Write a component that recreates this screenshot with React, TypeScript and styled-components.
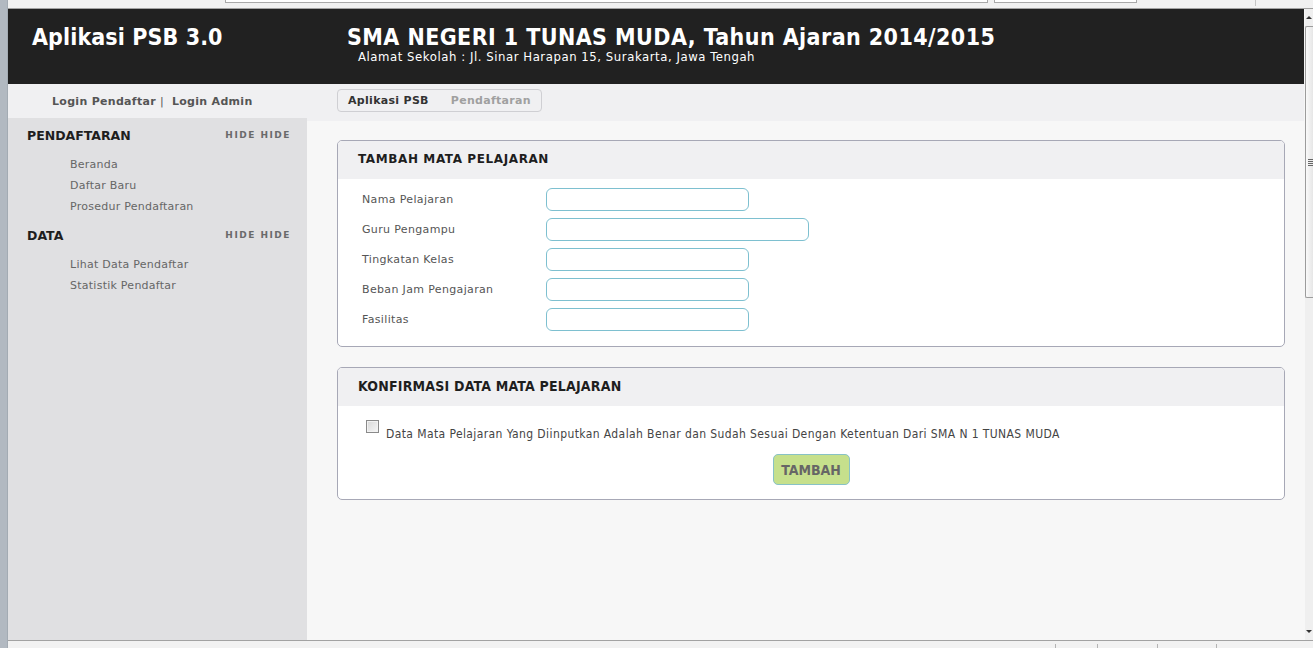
import React from "react";
import styled, { createGlobalStyle } from "styled-components";

const GlobalStyle = createGlobalStyle`
  html, body { margin: 0; padding: 0; background: #f7f7f7; }
  body { font-family: "DejaVu Sans", Verdana, sans-serif; overflow: hidden; }
  * { box-sizing: border-box; }
`;

const Frame = styled.div`
  display: flex;
  width: 1313px;
  height: 648px;
  overflow: hidden;
`;

const LeftEdge = styled.div`
  width: 8px;
  flex: none;
  background: #b2b9c1;
  border-right: 1px solid #a3abb3;
`;

const Window = styled.div`
  flex: 1;
  display: flex;
  flex-direction: column;
  min-width: 0;
`;

const TopStrip = styled.div`
  height: 9px;
  flex: none;
  display: flex;
  align-items: flex-start;
  background: #f1f1f1;
  border-bottom: 1px solid #a2a2a2;
  overflow: hidden;
`;

const ChromeBox = styled.div<{ $left: number; $width: number }>`
  margin-left: ${(p) => p.$left}px;
  width: ${(p) => p.$width}px;
  height: 3px;
  flex: none;
  background: #fff;
  border: 1px solid #a9a9a9;
  border-top: none;
`;

const ChromeDivider = styled.div<{ $left: number }>`
  margin-left: ${(p) => p.$left}px;
  width: 1px;
  height: 6px;
  background: #c4c4c4;
  flex: none;
`;

const Middle = styled.div`
  flex: 1;
  display: flex;
  min-height: 0;
`;

const Page = styled.div`
  flex: 1;
  display: flex;
  flex-direction: column;
  min-width: 0;
`;

const Header = styled.header`
  height: 75px;
  flex: none;
  display: grid;
  grid-template-columns: 315px 1fr;
  padding: 15px 0 0 24px;
  background: #212121;
  color: #fff;
`;

const Brand = styled.div`
  font-family: "DejaVu Sans Condensed", "DejaVu Sans", sans-serif;
  font-weight: bold;
  font-size: 23px;
  line-height: 26px;
  letter-spacing: 0.1px;
`;

const SchoolBlock = styled.div`
  display: flex;
  flex-direction: column;
`;

const SchoolTitle = styled.div`
  font-family: "DejaVu Sans Condensed", "DejaVu Sans", sans-serif;
  font-weight: bold;
  font-size: 23px;
  line-height: 26px;
  letter-spacing: 0.42px;
  white-space: nowrap;
`;

const Address = styled.div`
  margin-left: 11px;
  font-family: "DejaVu Sans Condensed", "DejaVu Sans", sans-serif;
  font-size: 13px;
  line-height: 13px;
  letter-spacing: 0.55px;
  white-space: nowrap;
`;

const SubNav = styled.nav`
  height: 34px;
  flex: none;
  display: grid;
  grid-template-columns: 299px 1fr;
  background: #f0f0f2;
`;

const LoginLinks = styled.div`
  display: flex;
  align-items: center;
  padding: 0 0 0 44px;
  font-size: 11px;
  font-weight: bold;
  letter-spacing: 0.3px;
  color: #555;
`;

const Pipe = styled.span`
  font-weight: normal;
  margin: 0 8px 0 4px;
  color: #555;
`;

const TabCell = styled.div`
  padding: 5px 0 0 30px;
`;

const TabBox = styled.div`
  display: inline-flex;
  align-items: center;
  gap: 22px;
  height: 23px;
  padding: 0 10px;
  border: 1px solid #cfcfd3;
  border-radius: 4px;
  background: #f0f0f2;
  font-size: 11px;
  font-weight: bold;
  letter-spacing: 0.3px;
`;

const Tab = styled.span<{ $active?: boolean }>`
  color: ${(p) => (p.$active ? "#333" : "#a0a0a0")};
`;

const Body = styled.div`
  flex: 1;
  display: flex;
  min-height: 0;
`;

const Sidebar = styled.aside`
  width: 299px;
  flex: none;
  background: #e0e0e2;
  padding-top: 10px;
`;

const Section = styled.div`
  & + & {
    margin-top: 11px;
  }
`;

const SectionHead = styled.div`
  display: flex;
  justify-content: space-between;
  align-items: flex-start;
  padding: 0 16px 0 19px;
`;

const SectionTitle = styled.div`
  font-size: 12.5px;
  line-height: 16px;
  font-weight: bold;
  color: #1e1e1e;
`;

const HideLinks = styled.div`
  font-size: 9px;
  line-height: 14px;
  font-weight: bold;
  letter-spacing: 1.5px;
  color: #6a6a6a;
`;

const MenuList = styled.ul`
  list-style: none;
  margin: 10px 0 0;
  padding: 0 0 0 62px;
`;

const MenuItem = styled.li`
  font-size: 11px;
  line-height: 21px;
  letter-spacing: 0.25px;
  color: #666;
`;

const Main = styled.main`
  flex: 1;
  min-width: 0;
  background: #f7f7f7;
  border-top: 3px solid #f0f0f2;
  padding: 19px 19px 0 30px;
`;

const Card = styled.section`
  border: 1px solid #a7a8b6;
  border-radius: 5px;
  background: #fff;
  overflow: hidden;
  & + & {
    margin-top: 20px;
  }
`;

const CardHead = styled.div<{ $condensed?: boolean }>`
  height: 38px;
  display: flex;
  align-items: center;
  padding: 0 0 2px 20px;
  background: #f0f0f2;
  font-family: ${(p) =>
    p.$condensed ? `"DejaVu Sans Condensed", "DejaVu Sans", sans-serif` : `"DejaVu Sans", sans-serif`};
  font-size: ${(p) => (p.$condensed ? "14px" : "12px")};
  letter-spacing: ${(p) => (p.$condensed ? "0.2px" : "0.6px")};
  font-weight: bold;
  color: #1e1e1e;
`;

const FormBody = styled.div`
  display: grid;
  grid-template-columns: 184px 1fr;
  row-gap: 7px;
  align-items: center;
  padding: 9px 24px 15px;
`;

const Label = styled.label`
  font-size: 11px;
  letter-spacing: 0.35px;
  color: #555;
`;

const TextInput = styled.input<{ $wide?: boolean }>`
  width: ${(p) => (p.$wide ? 263 : 203)}px;
  height: 23px;
  border: 1px solid #7ec0d0;
  border-radius: 6px;
  background: #fff;
  outline: none;
  padding: 0 6px;
`;

const ConfirmBody = styled.div`
  display: flex;
  flex-direction: column;
  align-items: center;
  padding: 14px 0 14px;
`;

const CheckRow = styled.div`
  align-self: stretch;
  display: flex;
  align-items: flex-start;
  gap: 7px;
  padding-left: 28px;
`;

const CheckBox = styled.span`
  width: 13px;
  height: 13px;
  flex: none;
  border: 1px solid #8a8a8a;
  background: linear-gradient(135deg, #d8d8d8, #f6f6f6);
  box-shadow: inset 0 0 0 1px #f2f2f2;
`;

const CheckText = styled.span`
  padding-top: 7px;
  font-family: "DejaVu Sans Condensed", "DejaVu Sans", sans-serif;
  font-size: 12px;
  line-height: 14px;
  letter-spacing: 0.4px;
  color: #444;
  white-space: nowrap;
`;

const SubmitButton = styled.button`
  margin-top: 13px;
  width: 77px;
  height: 31px;
  border: 1px solid #88c2c6;
  border-radius: 5px;
  background: #c6e08c;
  font-family: "DejaVu Sans Condensed", "DejaVu Sans", sans-serif;
  font-weight: bold;
  font-size: 14px;
  color: #666;
  padding: 0;
`;

const Scrollbar = styled.div`
  width: 9px;
  flex: none;
  display: flex;
  flex-direction: column;
  background: #efefef;
  border-left: 1px solid #f7f7f7;
`;

const ScrollArrow = styled.div<{ $down?: boolean }>`
  height: 17px;
  flex: none;
  display: flex;
  align-items: center;
  justify-content: center;
  &::after {
    content: "";
    width: 0;
    height: 0;
    border-left: 3px solid transparent;
    border-right: 3px solid transparent;
    ${(p) => (p.$down ? "border-top: 3px solid #333;" : "border-bottom: 3px solid #333;")}
  }
`;

const ScrollThumb = styled.div`
  height: 272px;
  flex: none;
  border: 1px solid #9c9c9c;
  border-right: none;
  border-radius: 2px 0 0 2px;
  background: linear-gradient(90deg, #fafafa, #e6e6e6);
  display: flex;
  align-items: center;
  justify-content: flex-end;
`;

const Grip = styled.div`
  width: 5px;
  height: 7px;
  background: repeating-linear-gradient(180deg, #666 0 1px, transparent 1px 2px);
`;

const ScrollTrack = styled.div`
  flex: 1;
`;

const StatusBar = styled.div`
  height: 8px;
  flex: none;
  display: flex;
  align-items: flex-end;
  background: #f2f2f2;
  border-top: 1px solid #a2a2a2;
`;

const StatusDivider = styled.div<{ $left: number }>`
  margin-left: ${(p) => p.$left}px;
  width: 1px;
  height: 4px;
  background: #b4b4b4;
  flex: none;
`;

const fields = [
  { label: "Nama Pelajaran" },
  { label: "Guru Pengampu", wide: true },
  { label: "Tingkatan Kelas" },
  { label: "Beban Jam Pengajaran" },
  { label: "Fasilitas" },
];

export default function App() {
  return (
    <>
      <GlobalStyle />
      <Frame>
        <LeftEdge />
        <Window>
          <TopStrip>
            <ChromeBox $left={217} $width={763} />
            <ChromeBox $left={6} $width={143} />
            <ChromeDivider $left={118} />
          </TopStrip>
          <Middle>
            <Page>
              <Header>
                <Brand>Aplikasi PSB 3.0</Brand>
                <SchoolBlock>
                  <SchoolTitle>SMA NEGERI 1 TUNAS MUDA, Tahun Ajaran 2014/2015</SchoolTitle>
                  <Address>Alamat Sekolah : Jl. Sinar Harapan 15, Surakarta, Jawa Tengah</Address>
                </SchoolBlock>
              </Header>
              <SubNav>
                <LoginLinks>
                  Login Pendaftar<Pipe>|</Pipe>Login Admin
                </LoginLinks>
                <TabCell>
                  <TabBox>
                    <Tab $active>Aplikasi PSB</Tab>
                    <Tab>Pendaftaran</Tab>
                  </TabBox>
                </TabCell>
              </SubNav>
              <Body>
                <Sidebar>
                  <Section>
                    <SectionHead>
                      <SectionTitle>PENDAFTARAN</SectionTitle>
                      <HideLinks>HIDE HIDE</HideLinks>
                    </SectionHead>
                    <MenuList>
                      <MenuItem>Beranda</MenuItem>
                      <MenuItem>Daftar Baru</MenuItem>
                      <MenuItem>Prosedur Pendaftaran</MenuItem>
                    </MenuList>
                  </Section>
                  <Section>
                    <SectionHead>
                      <SectionTitle>DATA</SectionTitle>
                      <HideLinks>HIDE HIDE</HideLinks>
                    </SectionHead>
                    <MenuList>
                      <MenuItem>Lihat Data Pendaftar</MenuItem>
                      <MenuItem>Statistik Pendaftar</MenuItem>
                    </MenuList>
                  </Section>
                </Sidebar>
                <Main>
                  <Card>
                    <CardHead>TAMBAH MATA PELAJARAN</CardHead>
                    <FormBody>
                      {fields.map((f) => (
                        <React.Fragment key={f.label}>
                          <Label>{f.label}</Label>
                          <div>
                            <TextInput $wide={f.wide} />
                          </div>
                        </React.Fragment>
                      ))}
                    </FormBody>
                  </Card>
                  <Card>
                    <CardHead $condensed>KONFIRMASI DATA MATA PELAJARAN</CardHead>
                    <ConfirmBody>
                      <CheckRow>
                        <CheckBox />
                        <CheckText>
                          Data Mata Pelajaran Yang Diinputkan Adalah Benar dan Sudah Sesuai Dengan Ketentuan Dari SMA N 1 TUNAS MUDA
                        </CheckText>
                      </CheckRow>
                      <SubmitButton>TAMBAH</SubmitButton>
                    </ConfirmBody>
                  </Card>
                </Main>
              </Body>
            </Page>
            <Scrollbar>
              <ScrollArrow />
              <ScrollThumb>
                <Grip />
              </ScrollThumb>
              <ScrollTrack />
              <ScrollArrow $down />
            </Scrollbar>
          </Middle>
          <StatusBar>
            <StatusDivider $left={1047} />
            <StatusDivider $left={41} />
            <StatusDivider $left={59} />
            <StatusDivider $left={58} />
          </StatusBar>
        </Window>
      </Frame>
    </>
  );
}
